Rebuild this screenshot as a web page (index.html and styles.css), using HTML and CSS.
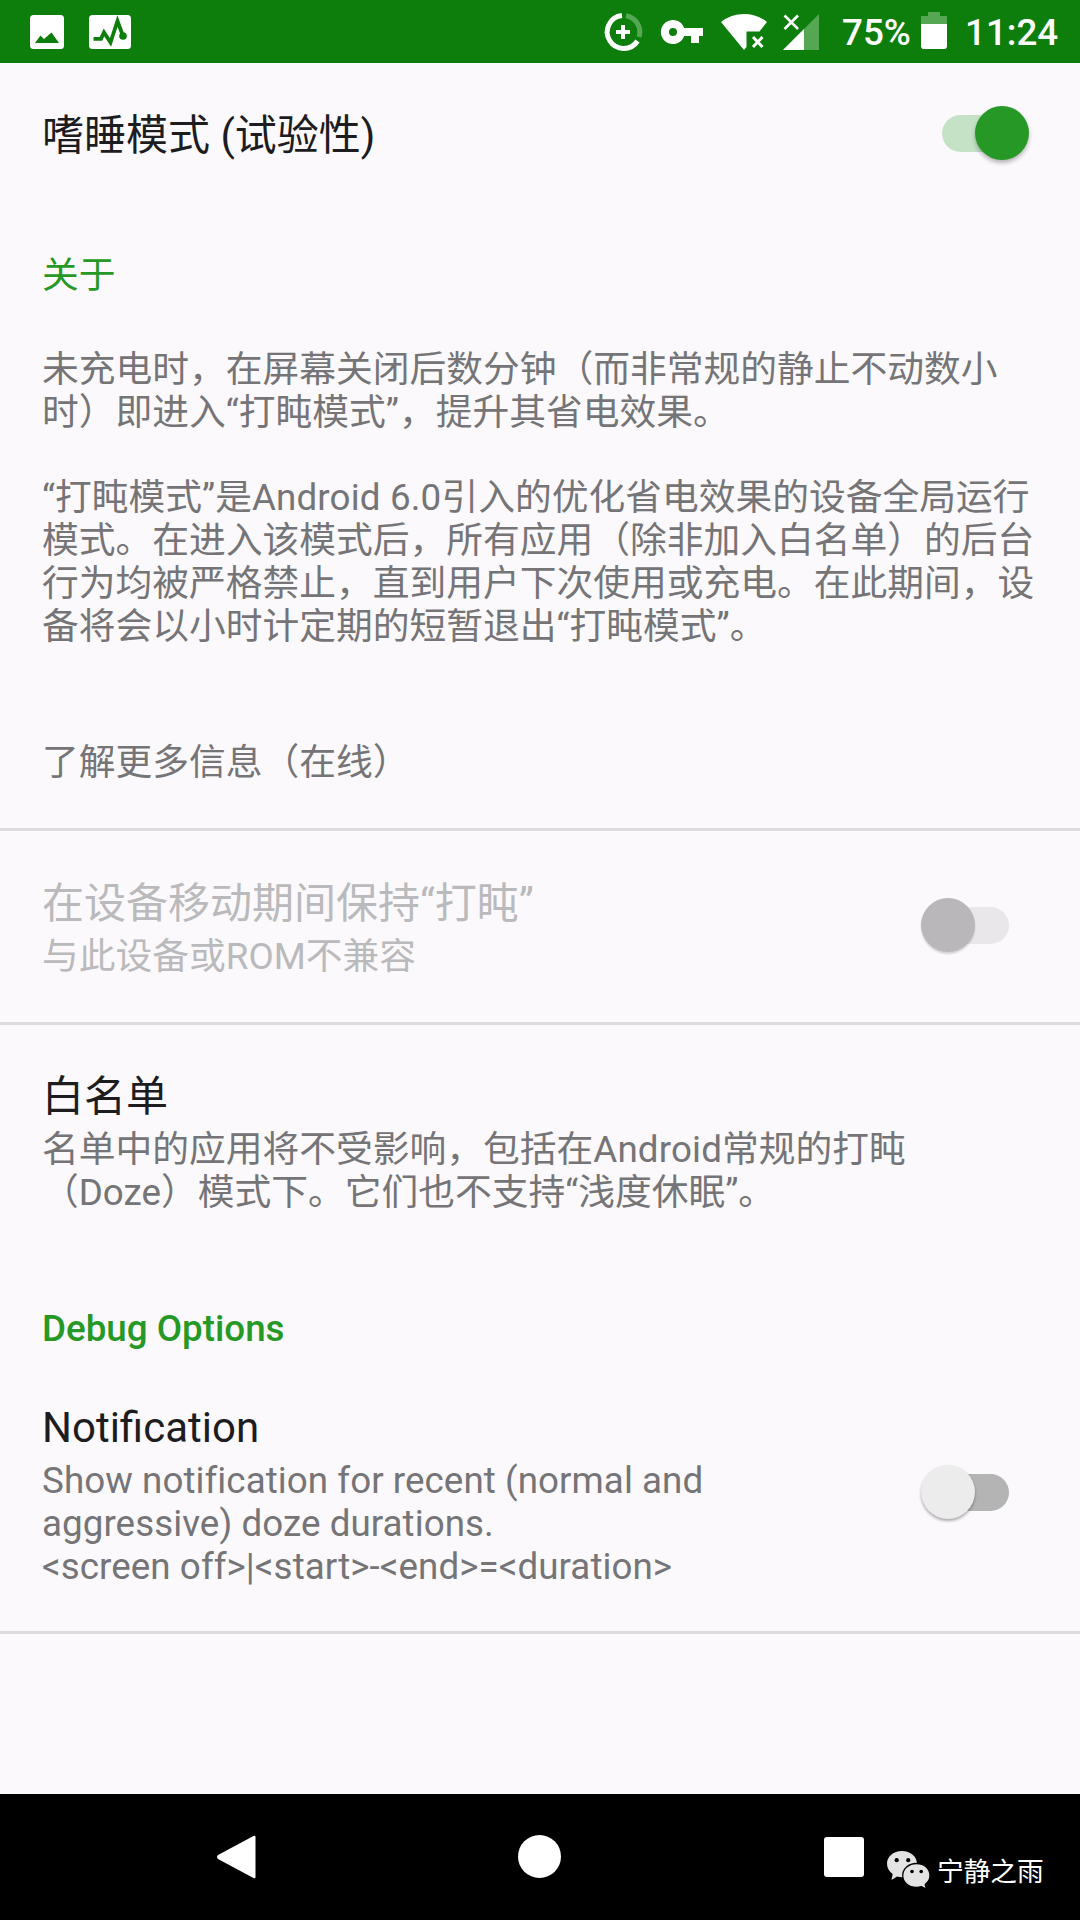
FILE: index.html
```html
<!DOCTYPE html>
<html lang="zh-CN">
<head>
<meta charset="utf-8">
<title>嗜睡模式</title>
<link rel="stylesheet" href="styles.css">
</head>
<body>
<div class="screen">
  <header class="status">
    <svg class="ic-image" width="34" height="34" viewBox="0 0 34 34"><rect width="34" height="34" rx="3.5" fill="#fff"/><path d="M5 28 10.500 20.500 14 24 21.500 17.500 29 28Z" fill="#0d7d0b"/></svg>
    <svg class="ic-pulse" width="42" height="34" viewBox="0 0 42 34"><rect width="42" height="34" rx="3.5" fill="#fff"/><path d="M4.500 23.800H12L15 17.500 21.500 27.500 28.500 6 34 21" fill="none" stroke="#0d7d0b" stroke-width="3.800"/><circle cx="34" cy="21" r="3.800" fill="#0d7d0b"/></svg>
    <svg class="ic-saver" width="38" height="38" viewBox="0 0 38 38"><g fill="none" stroke-width="5"><path d="M18 2.500A16.500 16.500 0 1 0 33.500 28" stroke="#fff"/><path d="M22 2.700A16.500 16.500 0 0 1 35 24" stroke="#56a754"/></g><path d="M19 12V26M12 19H26" stroke="#fff" stroke-width="4"/></svg>
    <svg class="ic-key" width="42" height="24" viewBox="0 0 42 24"><path fill="#fff" fill-rule="evenodd" d="M23.200 8A12 12 0 1 0 23.200 16H30V23H38V16H42V8ZM12 8A4 4 0 1 1 12 16A4 4 0 1 1 12 8Z"/></svg>
    <svg class="ic-wifi" width="46" height="36" viewBox="0 0 46 36"><path fill="#fff" d="M0 8Q10 0 23 0T46 8L38.500 17.500H25.500V33L23 36Z"/><path d="M32 23 41.500 33M41.500 23 32 33" stroke="#fff" stroke-width="3"/></svg>
    <svg class="ic-signal" width="36" height="36" viewBox="0 0 36 36"><path d="M36 0V36H0Z" fill="#56a754"/><path d="M21 15V36H0Z" fill="#fff"/><path d="M1.500 1.500 15 15M15 1.500 1.500 15" stroke="#fff" stroke-width="2.600"/></svg>
    <span class="percent">75%</span>
    <svg class="ic-battery" width="26" height="37" viewBox="0 0 26 37"><path d="M0 4H7V0H19V4H26V12H0Z" fill="#56a754"/><path d="M0 12H26V35L24.500 37H1.500L0 35Z" fill="#fff"/></svg>
    <span class="clock">11:24</span>
  </header>

  <main class="content">
    <section class="row master">
      <h1 class="title">嗜睡模式 (试验性)</h1>
      <span class="switch on"></span>
    </section>
    <h2 class="section about">关于</h2>
    <p class="text intro">未充电时，在屏幕关闭后数分钟（而非常规的静止不动数小<br>时）即进入“打盹模式”，提升其省电效果。</p>
    <p class="text detail">“打盹模式”是<span class="latin">Android 6.0</span>引入的优化省电效果的设备全局运行<br>模式。在进入该模式后，所有应用（除非加入白名单）的后台<br>行为均被严格禁止，直到用户下次使用或充电。在此期间，设<br>备将会以小时计定期的短暂退出“打盹模式”。</p>
    <p class="text more">了解更多信息（在线）</p>
    <section class="row motion">
      <div>
        <h3 class="title">在设备移动期间保持“打盹”</h3>
        <p class="text">与此设备或ROM不兼容</p>
      </div>
      <span class="switch disabled"></span>
    </section>
    <section class="whitelist">
      <h3 class="title">白名单</h3>
      <p class="text">名单中的应用将不受影响，包括在<span class="latin">Android</span>常规的打盹<br>（Doze）模式下。它们也不支持“浅度休眠”。</p>
    </section>
    <h2 class="section debug">Debug Options</h2>
    <section class="row notify">
      <div>
        <h3 class="title">Notification</h3>
        <p class="text">Show notification for recent (normal and<br>aggressive) doze durations.<br>&lt;screen off&gt;|&lt;start&gt;-&lt;end&gt;=&lt;duration&gt;</p>
      </div>
      <span class="switch off"></span>
    </section>
  </main>

  <nav class="nav">
    <svg class="back" width="39" height="44" viewBox="0 0 39 44"><path d="M38.500 2V42Q38.500 44 36.500 43L1 24Q-1 22 1 20L36.500 1Q38.500 0 38.500 2Z" fill="#fff"/></svg>
    <span class="home"></span>
    <span class="recent"></span>
    <div class="credit">
      <svg width="43" height="37" viewBox="0 0 43 37"><g fill="#e4e4e4"><path d="M15 0C6.500 0 0 5.500 0 12.700 0 17 2.200 20.500 5.700 23L4.500 29 10 25.500Q12.500 26.200 15 26.200C23.500 26.200 30 20.500 30 13S23.500 0 15 0Z"/><path stroke="#000" stroke-width="1.300" d="M29.500 12.500C21.500 12.500 15.700 17.800 15.700 24.600S21.500 36.400 29.500 36.400Q32 36.400 34.500 35.600L39.500 38 38.200 33.500C41.200 31.300 43 28.300 43 24.600 43 17.800 37.500 12.500 29.500 12.500Z"/></g><g fill="#000"><circle cx="9.700" cy="9.200" r="2.100"/><circle cx="21.200" cy="9.200" r="2.100"/><circle cx="25" cy="20.500" r="1.800"/><circle cx="34.200" cy="20.500" r="1.800"/></g></svg>
      <span class="name">宁静之雨</span>
    </div>
  </nav>
</div>
</body>
</html>
```

FILE: styles.css
```css
* { box-sizing: border-box; }

body {
  margin: 0;
  font-family: Roboto, "Noto Sans CJK SC", sans-serif;
  font-size: 36.75px;
  line-height: 43px;
  text-spacing-trim: space-all;
  text-autospace: no-autospace;
}

h1, h2, h3, p { margin: 0; font-weight: 400; }
svg { display: block; flex: none; overflow: visible; }

.screen {
  display: flex;
  flex-direction: column;
  width: 1080px;
  height: 1920px;
  background: #fbf9fc;
  overflow: hidden;
}

.status {
  display: flex;
  align-items: center;
  height: 63px;
  padding-left: 30px;
  background: #0d7d0b;
  color: #fff;
  font-weight: 500;
  white-space: nowrap;
}
.ic-pulse { margin-left: 25px; }
.ic-saver { margin-left: 473px; }
.ic-key { margin-left: 19px; }
.ic-wifi { margin-left: 18px; }
.ic-signal { margin-left: 16px; }
.percent { width: 79px; margin-left: 23px; padding-top: 2px; }
.ic-battery { margin-top: -2px; }
.clock { margin-left: 18px; padding-top: 2px; }

.content { flex: 1; }
.row { display: flex; justify-content: space-between; }
.title { font-size: 42px; line-height: 49px; color: #1d1c1e; white-space: nowrap; }
.text { color: #757477; white-space: nowrap; }
.section { font-size: 36.75px; color: #269825; }
.latin { letter-spacing: .15px; }

.master { height: 191px; padding: 48px 51px 0 42px; }
.about { height: 94px; padding-left: 42px; }
.intro { height: 128px; padding-left: 42px; }
.detail { height: 265px; padding-left: 42px; }
.more { height: 90px; padding-left: 42px; border-bottom: 3px solid #dddbde; }
.motion { height: 194px; padding: 48px 71px 0 42px; border-bottom: 3px solid #dddbde; }
.motion .title, .motion .text { color: #bab9bb; }
.title + .text { margin-top: 7px; }
.whitelist { height: 282px; padding: 47px 42px 0; }
.debug { height: 96px; padding-left: 42px; font-weight: 500; }
.notify { height: 231px; padding: 0 71px 0 42px; border-bottom: 3px solid #dddbde; }
.notify .text { letter-spacing: .06px; }

/* Toggle: the track is the ::before, the thumb the ::after */
.switch { display: grid; align-items: center; width: 88px; height: 54px; }
.switch::before, .switch::after { content: ""; grid-area: 1 / 1; }
.switch::before { height: 37px; border-radius: 19px; }
.switch::after { width: 54px; height: 54px; border-radius: 50%; }
.on { width: 87px; margin-top: -5px; }
.on::before { margin-right: 8px; background: #c5e2c6; }
.on::after { justify-self: end; background: #269825; box-shadow: 0 3px 4px rgba(0, 0, 0, .28); }
.disabled { margin-top: 19px; }
.disabled::before { margin-left: 8px; background: #e9e7ea; }
.disabled::after { background: #b9b7ba; box-shadow: 0 2px 2px rgba(0, 0, 0, .16); }
.off { margin-top: 62px; }
.off::before { margin-left: 8px; background: #b4b4b4; }
.off::after { background: #ececec; box-shadow: 0 2px 3px rgba(0, 0, 0, .32); }

.nav { display: flex; height: 126px; background: #000; color: #fff; }
.back { margin: 41px 0 0 217px; }
.home { width: 43px; height: 43px; margin: 41px 0 0 262px; border-radius: 50%; background: #fff; }
.recent { width: 40px; height: 40px; margin: 43px 0 0 263px; border-radius: 3px; background: #fff; }
.credit {
  display: flex;
  align-items: center;
  gap: 7px;
  height: 37px;
  margin: 57px 0 0 23px;
  font-size: 26.7px;
  white-space: nowrap;
}
.name { padding-top: 5px; }
```
